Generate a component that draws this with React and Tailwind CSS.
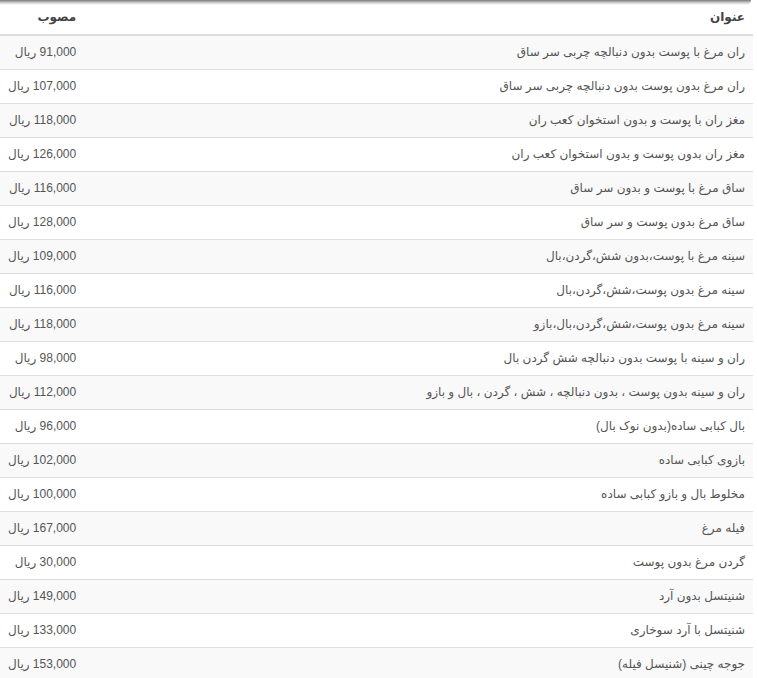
import React from 'react';

const rows = [
  ['ران مرغ با پوست بدون دنبالچه چربی سر ساق', '91,000'],
  ['ران مرغ بدون پوست بدون دنبالچه چربی سر ساق', '107,000'],
  ['مغز ران با پوست و بدون استخوان کعب ران', '118,000'],
  ['مغز ران بدون پوست و بدون استخوان کعب ران', '126,000'],
  ['ساق مرغ با پوست و بدون سر ساق', '116,000'],
  ['ساق مرغ بدون پوست و سر ساق', '128,000'],
  ['سینه مرغ با پوست،بدون شش،گردن،بال', '109,000'],
  ['سینه مرغ بدون پوست،شش،گردن،بال', '116,000'],
  ['سینه مرغ بدون پوست،شش،گردن،بال،بازو', '118,000'],
  ['ران و سینه با پوست بدون دنبالچه شش گردن بال', '98,000'],
  ['ران و سینه بدون پوست ، بدون دنبالچه ، شش ، گردن ، بال و بازو', '112,000'],
  ['بال کبابی ساده(بدون نوک بال)', '96,000'],
  ['بازوی کبابی ساده', '102,000'],
  ['مخلوط بال و بازو کبابی ساده', '100,000'],
  ['فیله مرغ', '167,000'],
  ['گردن مرغ بدون پوست', '30,000'],
  ['شنیتسل بدون آرد', '149,000'],
  ['شنیتسل با آرد سوخاری', '133,000'],
  ['جوجه چینی (شنیسل فیله)', '153,000'],
];

const App = () => {
  return (
    <div className="relative w-[753px] bg-white font-['Liberation_Sans','DejaVu_Sans',sans-serif] text-[12px] leading-[17px] text-[#555]">
      {/* shadow from the bar above */}
      <div className="absolute left-0 right-[2px] top-0 h-[5px] rounded-br-[8px] bg-gradient-to-b from-[#7a7a7a] via-[#c8c8c8] to-transparent" />

      <table dir="rtl" className="w-full border-collapse">
        <thead>
          <tr>
            <th className="border-b-2 border-[#ddd] px-2 pt-[9px] pb-2 text-right font-bold text-[#444]">عنوان</th>
            <th className="w-[84px] border-b-2 border-[#ddd] px-2 pt-[9px] pb-2 text-right font-bold text-[#444]">مصوب</th>
          </tr>
        </thead>
        <tbody>
          {rows.map(([title, price], i) => (
            <tr key={i} className={i % 2 === 0 ? 'bg-[#f9f9f9]' : 'bg-white'}>
              <td className="border-t border-[#ddd] px-2 py-2 text-right whitespace-nowrap">{title}</td>
              <td className="border-t border-[#ddd] px-2 py-2 text-right whitespace-nowrap">{price} ریال</td>
            </tr>
          ))}
        </tbody>
      </table>
    </div>
  );
};

export default App;
